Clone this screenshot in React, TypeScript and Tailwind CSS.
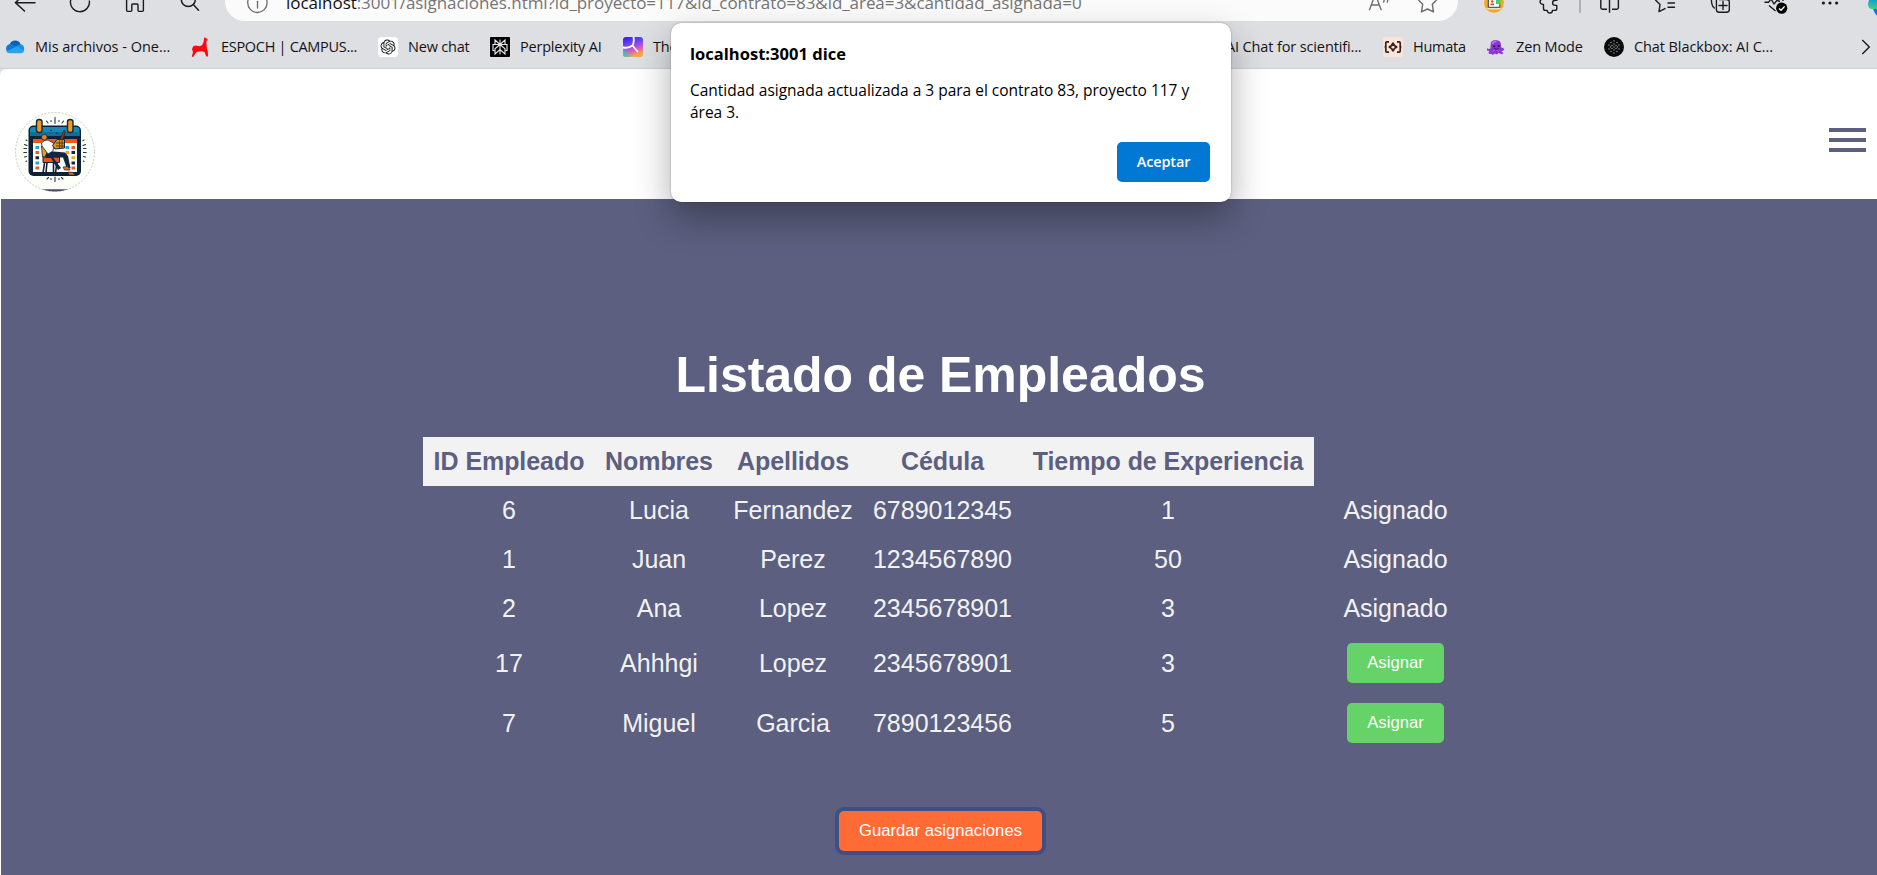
import type { ReactNode } from "react";

const uiFont = "font-['Open_Sans','Noto_Sans',sans-serif]";

function BackIcon() {
  return (
    <svg className="ml-[14px] h-[14px] w-[22px] shrink-0" viewBox="14 0 22 14" fill="none" stroke="#1b1b1b" strokeWidth="1.5" strokeLinecap="round">
      <path d="M16 2.7H35M24 -6L15.5 2.7L24.5 11" />
    </svg>
  );
}

function ReloadIcon() {
  return (
    <svg className="ml-[33px] h-[14px] w-[22px] shrink-0" viewBox="69 0 22 14" fill="none" stroke="#1b1b1b" strokeWidth="1.4">
      <path d="M71 -1A9.5 9.5 0 1 0 89.3 0.5" />
    </svg>
  );
}

function HomeIcon() {
  return (
    <svg className="ml-[34px] h-[14px] w-[20px] shrink-0" viewBox="125 0 20 14" fill="none" stroke="#1b1b1b" strokeWidth="1.4">
      <path d="M126.6 -2V10.3Q126.6 11.4 127.7 11.4H130.8Q131.8 11.4 131.8 10.3V5Q131.8 4 132.8 4H137Q138 4 138 5V10.3Q138 11.4 139 11.4H142.3Q143.4 11.4 143.4 10.3V-2" />
    </svg>
  );
}

function SearchIcon() {
  return (
    <svg className="ml-[35px] h-[14px] w-[20px] shrink-0" viewBox="180 0 20 14" fill="none" stroke="#1b1b1b" strokeWidth="1.5" strokeLinecap="round">
      <circle cx="188.3" cy="-0.5" r="7" />
      <path d="M193.3 4.6L198.5 10.3" />
    </svg>
  );
}

function AddressBar() {
  return (
    <div className="ml-[25px] flex h-[21px] w-[1233px] shrink-0 items-start overflow-hidden rounded-b-[20px] bg-[#fbfbfc]">
      <svg className="ml-[21px] h-[15px] w-[22px] shrink-0" viewBox="246 0 22 15" fill="none" stroke="#6b6b6b" strokeWidth="1.3">
        <circle cx="257.4" cy="2.8" r="9.7" />
        <path d="M257.5 1.3V8" strokeLinecap="round" />
      </svg>
      <div className="-mt-[9px] ml-[18px] w-[840px] text-[17px] leading-[24px] tracking-[-0.06px] whitespace-nowrap text-[#757575]">
        <span className="text-[#111]">localhost</span>:3001/asignaciones.html?id_proyecto=117&amp;id_contrato=83&amp;id_area=3&amp;cantidad_asignada=0
      </div>
      <svg className="ml-[241px] h-[14px] w-[24px] shrink-0" viewBox="1367 0 24 14" fill="none" stroke="#6b6b6b" strokeWidth="1.3">
        <path d="M1369.3 10.3L1375.3 -6L1381.3 10.3M1371.3 5H1379.3M1384 -2Q1384.6 1 1383.3 2.6M1387.6 -2Q1388.2 1 1386.9 2.6" />
      </svg>
      <svg className="ml-[25px] h-[14px] w-[24px] shrink-0" viewBox="1416 0 24 14" fill="none" stroke="#6b6b6b" strokeWidth="1.4" strokeLinejoin="round">
        <path d="M1427.5 -7L1430.3 -1.2L1437 -0.5L1432.3 4.2L1433.5 11.9L1427.5 9L1421.5 11.9L1422.7 4.2L1418 -0.5L1424.7 -1.2Z" />
      </svg>
    </div>
  );
}

function ToolbarActions() {
  return (
    <>
      <svg className="ml-[24px] h-[16px] w-[24px] shrink-0" viewBox="1482 0 24 16">
        <circle cx="1494" cy="3" r="9.8" fill="#f5a81c" />
        <path d="M1496 0H1500.5V5H1496Z" fill="#3fcf6b" />
        <path d="M1488.5 0H1496V4H1499.5V7.5H1488.5Z" fill="#fff" />
        <path d="M1488.3 -1V7.3H1499.8V4.5" fill="none" stroke="#4a3d33" strokeWidth="1" />
        <path d="M1490.5 5.3V3.5H1494V5.3Z" fill="#e0442e" />
        <circle cx="1492.2" cy="1.5" r="1.2" fill="#e0442e" />
        <path d="M1486.5 8H1501.5L1500 9.5H1488Z" fill="#e8e2d8" />
      </svg>
      <svg className="ml-[33px] h-[14px] w-[22px] shrink-0" viewBox="1539 0 22 14" fill="none" stroke="#1b1b1b" strokeWidth="1.4" strokeLinejoin="round">
        <path d="M1544 -1H1542.8A2.3 2.3 0 0 0 1542.8 4.4H1543.5V8.5Q1543.5 10.4 1545.4 10.4H1547.2A2.6 2.6 0 0 0 1552.4 10.4H1554.6Q1556.8 10.4 1556.8 8.5V5.4H1555.2A2.6 2.6 0 0 1 1555.2 0.2H1557V-2" />
      </svg>
      <div className="ml-[18px] h-[13px] w-[2px] shrink-0 bg-[#b0b1b5]" />
      <svg className="ml-[18px] h-[14px] w-[22px] shrink-0" viewBox="1599 0 22 14" fill="none" stroke="#1b1b1b" strokeWidth="1.4">
        <path d="M1609.5 -1V12.8M1607 9.3H1602.5Q1600.8 9.3 1600.8 7.6V-1M1612 9.3H1616.7Q1618.4 9.3 1618.4 7.6V-1" />
      </svg>
      <svg className="ml-[33px] h-[14px] w-[22px] shrink-0" viewBox="1654 0 22 14" fill="none" stroke="#1b1b1b" strokeWidth="1.4" strokeLinecap="round" strokeLinejoin="round">
        <path d="M1660 -2L1655.5 0L1660 4.6L1659 11.6L1665 8.6M1668 3H1674.5M1668 7.3H1674.5M1669 -1H1674.5" />
      </svg>
      <svg className="ml-[34px] h-[14px] w-[22px] shrink-0" viewBox="1710 0 22 14" fill="none" stroke="#1b1b1b" strokeWidth="1.4" strokeLinecap="round">
        <path d="M1716.4 -1V9.5Q1716.4 12.2 1719 12.2H1726.6Q1729.3 12.2 1729.3 9.5V2Q1729.3 -0.4 1726.6 -0.4H1719.5M1723 1.5V9.5M1719 5.5H1727M1711.4 -1Q1711.4 6 1714.3 8" />
      </svg>
      <svg className="ml-[32px] h-[15px] w-[26px] shrink-0" viewBox="1764 0 26 15" fill="none" stroke="#1b1b1b" strokeWidth="1.4" strokeLinejoin="round">
        <path d="M1764.5 2.3H1768.5L1771 -1L1774 4L1777 0.3L1780 1.5M1769 5.5L1775.5 11M1783 1V-1" />
        <circle cx="1781.7" cy="8.2" r="5.6" fill="#000" stroke="none" />
        <path d="M1779 8.4L1781 10.3L1784.6 6.4" stroke="#fff" />
      </svg>
      <svg className="ml-[30px] h-[8px] w-[20px] shrink-0" viewBox="1820 0 20 8" fill="#1b1b1b">
        <circle cx="1823.4" cy="3" r="1.6" />
        <circle cx="1830" cy="3" r="1.6" />
        <circle cx="1836.6" cy="3" r="1.6" />
      </svg>
      <svg className="ml-[27px] h-[17px] w-[10px] shrink-0" viewBox="1867 0 10 17">
        <defs>
          <linearGradient id="assistant" x1="0" y1="0" x2="0" y2="1">
            <stop offset="0" stopColor="#0fa5c9" />
            <stop offset="1" stopColor="#3fd08d" />
          </linearGradient>
        </defs>
        <path d="M1869 0H1877V9H1871Q1868 8 1868 4Z" fill="url(#assistant)" />
        <path d="M1873 9H1877V16Q1875 14 1873 9Z" fill="#1f6bf0" />
      </svg>
    </>
  );
}

function CloudIcon() {
  return (
    <svg viewBox="0 0 20 20" className="size-5 shrink-0">
      <path d="M4.6 7.4A6 6 0 0 1 15.8 7.4L12 12L4 10Z" fill="#0a5fb8" />
      <path d="M4.5 15.8A4.4 4.4 0 0 1 4.6 7.2Q7 6.6 9 7.8L14 11L8 15.8Z" fill="#1177d3" />
      <path d="M9.5 10L15 7.2A4.4 4.4 0 0 1 16 15.8Z" fill="#1890e6" />
      <path d="M1.2 14.4L11.6 9.6L19.2 14Q18.3 16.2 15.8 16.2H4.6Q2.4 16.2 1.2 14.4Z" fill="#28a4ea" />
    </svg>
  );
}

function LlamaIcon() {
  return (
    <svg viewBox="0 0 20 20" className="size-5 shrink-0" fill="#f50a12">
      <path d="M13.2 0.8L14 0.2L14.8 1.2L16.4 1.8L16.6 3.4L15.4 3.8L15.6 8L16 12L16.8 14.5L17 19.6H15.2L13.8 15.5L11.5 14.2L6 14.8L4 17L2.6 19.8H0.8L2 15L1 12.6L2 9.6L4.2 8.6L9 9.2L11.2 8L12.6 5Z" />
    </svg>
  );
}

function KnotIcon() {
  return (
    <svg viewBox="0 0 20 20" className="size-5 shrink-0">
      <rect width="20" height="20" rx="3.5" fill="#fff" />
      <g transform="translate(2.5 2.5) scale(.625)">
        <path
          fill="#1c1c1c"
          d="M22.282 9.821a5.985 5.985 0 0 0-.516-4.91 6.046 6.046 0 0 0-6.51-2.9A6.065 6.065 0 0 0 4.981 4.18a5.985 5.985 0 0 0-3.998 2.9 6.046 6.046 0 0 0 .743 7.097 5.98 5.98 0 0 0 .51 4.911 6.051 6.051 0 0 0 6.515 2.9A5.985 5.985 0 0 0 13.26 24a6.056 6.056 0 0 0 5.772-4.206 5.99 5.99 0 0 0 3.997-2.9 6.056 6.056 0 0 0-.747-7.073zM13.26 22.43a4.476 4.476 0 0 1-2.876-1.04l.141-.081 4.779-2.758a.795.795 0 0 0 .392-.681v-6.737l2.02 1.168a.071.071 0 0 1 .038.052v5.583a4.504 4.504 0 0 1-4.494 4.494zM3.6 18.304a4.47 4.47 0 0 1-.535-3.014l.142.085 4.783 2.759a.771.771 0 0 0 .78 0l5.843-3.369v2.332a.08.08 0 0 1-.033.062L9.74 19.95a4.5 4.5 0 0 1-6.14-1.646zM2.34 7.896a4.485 4.485 0 0 1 2.366-1.973V11.6a.766.766 0 0 0 .388.676l5.815 3.355-2.02 1.168a.076.076 0 0 1-.071 0l-4.83-2.786A4.504 4.504 0 0 1 2.34 7.872zm16.597 3.855l-5.833-3.387L15.119 7.2a.076.076 0 0 1 .071 0l4.83 2.791a4.494 4.494 0 0 1-.676 8.105v-5.678a.79.79 0 0 0-.407-.667zm2.01-3.023l-.141-.085-4.774-2.782a.776.776 0 0 0-.785 0L9.409 9.23V6.897a.066.066 0 0 1 .028-.061l4.83-2.787a4.5 4.5 0 0 1 6.68 4.66zm-12.64 4.135l-2.02-1.164a.08.08 0 0 1-.038-.057V6.075a4.5 4.5 0 0 1 7.375-3.453l-.142.08-4.778 2.758a.795.795 0 0 0-.393.681zm1.097-2.365l2.602-1.5 2.607 1.5v2.999l-2.597 1.5-2.607-1.5z"
        />
      </g>
    </svg>
  );
}

function PerplexityIcon() {
  return (
    <svg viewBox="0 0 20 20" className="size-5 shrink-0">
      <rect width="20" height="20" rx="1" fill="#000" />
      <g fill="none" stroke="#e8e8e8" strokeWidth="1.1">
        <path d="M10 2.5V17.5M5 3L10 7.5L15 3V7.5H5ZM10 7.5L5 11.8V17L10 12.6L15 17V11.8ZM5 13.5H3V7.5H5M15 13.5H17V7.5H15" />
      </g>
    </svg>
  );
}

function TheIcon() {
  return (
    <svg viewBox="0 0 20 20" className="size-5 shrink-0">
      <defs>
        <linearGradient id="spectrum" x1="0" y1="0" x2="0.4" y2="1">
          <stop offset="0" stopColor="#2a1af0" />
          <stop offset="0.5" stopColor="#7a4cf0" />
          <stop offset="0.78" stopColor="#e85bb8" />
          <stop offset="1" stopColor="#f7a648" />
        </linearGradient>
        <linearGradient id="mint" x1="0" y1="1" x2="0.6" y2="0.5">
          <stop offset="0" stopColor="#2bd9a0" />
          <stop offset="0.6" stopColor="#2bd9c0" stopOpacity="0" />
        </linearGradient>
      </defs>
      <rect width="20" height="20" rx="3" fill="url(#spectrum)" />
      <rect width="20" height="20" rx="3" fill="url(#mint)" />
      <path d="M10.5 0Q11.5 5 9.5 8.5Q6 11.5 0 10.5M9.5 8.5L14.5 14.5" fill="none" stroke="#fff" strokeWidth="1.8" strokeLinecap="round" />
    </svg>
  );
}

function HumataIcon() {
  return (
    <svg viewBox="0 0 20 20" className="size-5 shrink-0">
      <rect width="20" height="20" rx="2" fill="#f8e4d8" />
      <path d="M6 4.8H3.8Q2.8 4.8 2.8 6V14Q2.8 15.2 3.8 15.2H6M14 4.8H16.2Q17.2 4.8 17.2 6V14Q17.2 15.2 16.2 15.2H14M10 5.7Q10.8 9.2 14.2 10Q10.8 10.8 10 14.3Q9.2 10.8 5.8 10Q9.2 9.2 10 5.7Z" fill="none" stroke="#3a2018" strokeWidth="1.7" />
      <path d="M1.6 10H2.8M17.2 10H18.4" stroke="#3a2018" strokeWidth="1.7" />
    </svg>
  );
}

function OctopusIcon() {
  return (
    <svg viewBox="0 0 20 20" className="size-5 shrink-0">
      <path d="M4.6 10Q3.8 3 9.5 2.9Q15.6 3 15 9Q15.4 12 16.6 10.5L18.4 12.2Q16.8 14.8 15 14.2L17.5 16L16 17.2L12.5 16L11 17.5L9 16.4L6.5 18L5.5 16.8L3 17L2.5 15L3.8 14L1 13.5V11.2L2.6 12Q4.6 12.4 4.6 10Z" fill="#8a35d6" />
      <path d="M6.2 7.4Q7 4.4 10.5 4.3" stroke="#b675f2" strokeWidth="1.6" fill="none" />
      <path d="M6.5 14.5L9 13M13 14.5L11 13" stroke="#b266ee" strokeWidth="1" fill="none" />
      <circle cx="8.2" cy="9.3" r="1" fill="#2a0b4d" />
      <circle cx="12.6" cy="9" r="1" fill="#2a0b4d" />
      <path d="M8 11.6Q10.4 13.2 12.8 11.2" stroke="#3d1168" fill="none" />
    </svg>
  );
}

const dots = [
  [10, 4], [7, 5.5], [13, 5.5], [10, 7], [5, 8], [8, 8.5], [12, 8.5], [15, 8], [10, 10],
  [6.5, 10], [13.5, 10], [5, 12], [8, 11.5], [12, 11.5], [15, 12], [10, 13], [7, 14.5], [13, 14.5], [10, 16],
];

function BlackboxIcon() {
  return (
    <svg viewBox="0 0 20 20" className="size-5 shrink-0">
      <circle cx="10" cy="10" r="10" fill="#0b0b0c" />
      {dots.map(([x, y]) => (
        <circle key={`${x}-${y}`} cx={x} cy={y} r="0.7" fill="#a5a5a5" />
      ))}
    </svg>
  );
}

function Bookmark({ icon, label, className }: { icon: ReactNode; label: string; className: string }) {
  return (
    <div className={`flex shrink-0 items-center whitespace-nowrap ${className}`}>
      {icon}
      <span className="ml-[10px]">{label}</span>
    </div>
  );
}

function BookmarksBar() {
  return (
    <div className="flex h-[46px] items-center pt-[5px] pb-px pl-[5px] text-[14.5px] leading-5 text-[#141414]">
      <Bookmark className="w-[186px] tracking-[-0.02px]" icon={<CloudIcon />} label="Mis archivos - One..." />
      <Bookmark className="w-[187px] tracking-[-0.3px]" icon={<LlamaIcon />} label="ESPOCH | CAMPUS..." />
      <Bookmark className="w-[112px] tracking-[-0.2px]" icon={<KnotIcon />} label="New chat" />
      <Bookmark className="w-[133px] tracking-[-0.2px]" icon={<PerplexityIcon />} label="Perplexity AI" />
      <Bookmark className="w-[573px] tracking-[-0.25px]" icon={<TheIcon />} label="The" />
      <Bookmark className="w-[187px] tracking-[-0.13px]" icon={<span className="size-5 shrink-0" />} label="AI Chat for scientifi..." />
      <Bookmark className="w-[103px] tracking-[-0.25px]" icon={<HumataIcon />} label="Humata" />
      <Bookmark className="w-[118px] tracking-[-0.15px]" icon={<OctopusIcon />} label="Zen Mode" />
      <Bookmark className="tracking-[-0.09px]" icon={<BlackboxIcon />} label="Chat Blackbox: AI C..." />
      <svg viewBox="0 0 10 16" className="mr-[6px] ml-auto h-4 w-[10px] shrink-0" fill="none" stroke="#1b1b1b" strokeWidth="1.4">
        <path d="M1.3 1L8.3 8L1.3 15" />
      </svg>
    </div>
  );
}

function Logo() {
  return (
    <svg viewBox="0 0 80 80" className="size-20">
      <defs>
        <clipPath id="disc">
          <circle cx="40" cy="40" r="39.5" />
        </clipPath>
      </defs>
      <circle cx="40" cy="40" r="39.5" fill="#fcfef8" stroke="#b9bcbc" strokeWidth="0.8" strokeDasharray="2 1.5" />
      <path d="M10 77.3H70V80H10Z" fill="#4b4d66" clipPath="url(#disc)" />
      <g stroke="#22324a" strokeWidth="1.1" strokeLinecap="round">
        <path d="M40 5.5V11.5M36 8.5V9.5M44 8.5V9.5M31.5 9L33 11M48.5 9L47 11M40 65V69.5M36 66.5V67.5M44 66.5V67.5M32 67L33.5 65.5M48 67L46.5 65.5" />
        <path d="M11 28L12 28.6M9.5 32.5L12 33.5M9 36.5H11.5M8.8 40.5H11.5M9.5 45L11.5 44.5M11 49.5L11.6 49M69 28L68 28.6M70.5 32.5L68 33.5M71 36.5H68.5M71.2 40.5H68.5M70.5 45L68.5 44.5M69 49.5L68.4 49" />
      </g>
      <rect x="13.5" y="13.5" width="52.5" height="50.5" rx="5" fill="#0d2238" />
      <path d="M15 24V18Q15 15 18 15H61.5Q64.5 15 64.5 18V24Z" fill="#1789b5" />
      <path d="M15 20H64.5V24H15Z" fill="#126f98" />
      <rect x="18" y="31" width="44" height="29" fill="#fbfdf8" />
      <rect x="18" y="27" width="44" height="4" fill="#f2541b" />
      <rect x="21.5" y="7.5" width="5.5" height="13" rx="2.6" fill="#f29a1f" stroke="#16283c" strokeWidth="1.4" />
      <rect x="52.5" y="7.5" width="5.5" height="13" rx="2.6" fill="#f29a1f" stroke="#16283c" strokeWidth="1.4" />
      <circle cx="36" cy="18.5" r="0.8" fill="#0d2238" />
      <circle cx="42" cy="21" r="0.8" fill="#0d2238" />
      <g>
        <path d="M20.5 34H24V37H20.5ZM20.5 49.5H24V52.5H20.5Z" fill="#25a3cf" />
        <path d="M20.5 39H24V42H20.5ZM20.5 54.5H24V57.5H20.5Z" fill="#ef5a22" />
        <path d="M20.5 44.2H24V47.2H20.5Z" fill="#16283c" />
        <path d="M50.5 34H54V37H50.5Z" fill="#25a3cf" />
        <path d="M50.5 39H54V42H50.5ZM56.5 44.2H60V47.2H56.5Z" fill="#f5a51c" />
        <path d="M56.5 34H60V37H56.5ZM56.5 54.5H60V57.5H56.5Z" fill="#ef5a22" />
        <path d="M56.5 39H60V42H56.5ZM56.5 49.5H60V52.5H56.5Z" fill="#16283c" />
      </g>
      <path d="M26.5 34L31 36L32 45H27.5Z" fill="#f29a1f" stroke="#16283c" strokeWidth="0.8" />
      <path d="M28 45H44.5V50.5H28Z" fill="#ef4f1c" stroke="#16283c" strokeWidth="1" />
      <path d="M29.5 51L28 61M42 50L40.5 61M38.5 50V61M32 50.5L31 60" stroke="#0d2238" strokeWidth="1.6" />
      <path d="M30 43.5L33 39L50 40.5L53 44L55.5 56L52 57L48 45.5L38 45.5L46 56L43 58L36 46L31 46Z" fill="#10273f" />
      <path d="M26.5 31Q29 27.5 33 28L39 31.5L38 39L33 42L27 34Z" fill="#fff" stroke="#16283c" strokeWidth="0.8" />
      <circle cx="29.3" cy="25.3" r="2.9" fill="#ef7a20" stroke="#16283c" strokeWidth="0.8" />
      <path d="M42 27.5L49.5 27.5V36L40 37L37.5 33.5Z" fill="#d9961f" stroke="#16283c" strokeWidth="1" />
      <path d="M41 31H49M41 34H49M44.5 28.5V36M47 28.5V36" stroke="#4a3413" strokeWidth="0.9" />
      <path d="M45 27.5L49 18L50.5 20L47.5 28Z" fill="#8c3b22" stroke="#16283c" strokeWidth="0.8" />
      <path d="M48 55L53 54.5L55 58H49.5ZM53 60L58 60.5L60 63H54Z" fill="#ef6a20" stroke="#16283c" strokeWidth="0.7" />
    </svg>
  );
}

interface Employee {
  id: number;
  name: string;
  surname: string;
  card: string;
  years: number;
  assigned: boolean;
}

const employees: Employee[] = [
  { id: 6, name: "Lucia", surname: "Fernandez", card: "6789012345", years: 1, assigned: true },
  { id: 1, name: "Juan", surname: "Perez", card: "1234567890", years: 50, assigned: true },
  { id: 2, name: "Ana", surname: "Lopez", card: "2345678901", years: 3, assigned: true },
  { id: 17, name: "Ahhhgi", surname: "Lopez", card: "2345678901", years: 3, assigned: false },
  { id: 7, name: "Miguel", surname: "Garcia", card: "7890123456", years: 5, assigned: false },
];

function EmployeeTable() {
  return (
    <table className="w-[1035px] table-fixed border-collapse text-center text-[25px] leading-[29px] whitespace-nowrap text-[#f2f2f2]">
      <colgroup>
        <col className="w-[172px]" />
        <col className="w-[128px]" />
        <col className="w-[140px]" />
        <col className="w-[159px]" />
        <col className="w-[292px]" />
        <col className="w-[19px]" />
        <col className="w-[125px]" />
      </colgroup>
      <thead>
        <tr className="h-[49px] text-[#5c5f7f]">
          {["ID Empleado", "Nombres", "Apellidos", "Cédula", "Tiempo de Experiencia"].map((title) => (
            <th key={title} className="bg-[#f2f2f2] p-0 font-bold tracking-[-0.06px]">
              {title}
            </th>
          ))}
        </tr>
      </thead>
      <tbody>
        {employees.map((e) => (
          <tr key={e.id} className={e.assigned ? "h-[49px]" : "h-[60px]"}>
            <td className="p-0">{e.id}</td>
            <td className="p-0">{e.name}</td>
            <td className="p-0">{e.surname}</td>
            <td className="p-0">{e.card}</td>
            <td className="p-0">{e.years}</td>
            <td className="p-0" />
            <td className="p-0">
              {e.assigned ? (
                "Asignado"
              ) : (
                <button className="mx-auto block h-10 w-[97px] rounded-[5px] bg-[#65d367] text-[16.67px] leading-5 text-white">Asignar</button>
              )}
            </td>
          </tr>
        ))}
      </tbody>
    </table>
  );
}

function AlertDialog() {
  return (
    <div
      className={`absolute top-[23px] left-[671px] flex h-[179px] w-[560px] flex-col rounded-[10px] bg-white pt-[20px] pr-[21px] pl-[19px] text-black shadow-[0_0_2px_rgba(0,0,0,0.35),0_16px_36px_rgba(0,0,0,0.32)] ${uiFont}`}
    >
      <h2 className="text-[16.5px] leading-[22px] font-bold tracking-[0.02px]">localhost:3001 dice</h2>
      <p className="mt-[14px] text-[15.5px] leading-[22px] tracking-[-0.01px] whitespace-nowrap">
        Cantidad asignada actualizada a 3 para el contrato 83, proyecto 117 y
        <br />
        área 3.
      </p>
      <button className="mt-[19px] h-10 w-[93px] self-end rounded-[5px] bg-[#0078d4] text-[14.5px] font-semibold tracking-[-0.15px] text-white">Aceptar</button>
    </div>
  );
}

export default function App() {
  return (
    <div className="relative flex h-[875px] w-[1877px] flex-col overflow-hidden bg-[#dedfe3]">
      <div className={`flex h-[69px] shrink-0 flex-col border-b border-[#d0d1d5] ${uiFont}`}>
        <div className="flex h-[22px] shrink-0 items-start">
          <BackIcon />
          <ReloadIcon />
          <HomeIcon />
          <SearchIcon />
          <AddressBar />
          <ToolbarActions />
        </div>
        <BookmarksBar />
      </div>
      <div className="flex grow flex-col overflow-hidden rounded-tl-[6px] bg-white font-['Liberation_Sans',Arial,sans-serif]">
        <header className="flex h-[130px] shrink-0 items-start justify-between pr-[11px] pl-[15px]">
          <div className="mt-[43px]">
            <Logo />
          </div>
          <div className="mt-[59px] flex w-[37px] flex-col gap-[6px]">
            <div className="h-1 bg-[#5c5f7f]" />
            <div className="h-1 bg-[#5c5f7f]" />
            <div className="h-1 bg-[#5c5f7f]" />
          </div>
        </header>
        <main className="ml-px flex grow flex-col items-center bg-[#5c5f7f] pt-[146px] pl-[3px]">
          <h1 className="text-[50px] leading-[60px] font-bold tracking-[-0.04px] text-white">Listado de Empleados</h1>
          <div className="mt-[32px]">
            <EmployeeTable />
          </div>
          <button className="mt-[58px] h-10 w-[203px] rounded-[5px] bg-[#ff6b35] text-[16.67px] leading-5 text-white ring-[4px] ring-[#3f4f86]">
            Guardar asignaciones
          </button>
        </main>
      </div>
      <AlertDialog />
    </div>
  );
}
